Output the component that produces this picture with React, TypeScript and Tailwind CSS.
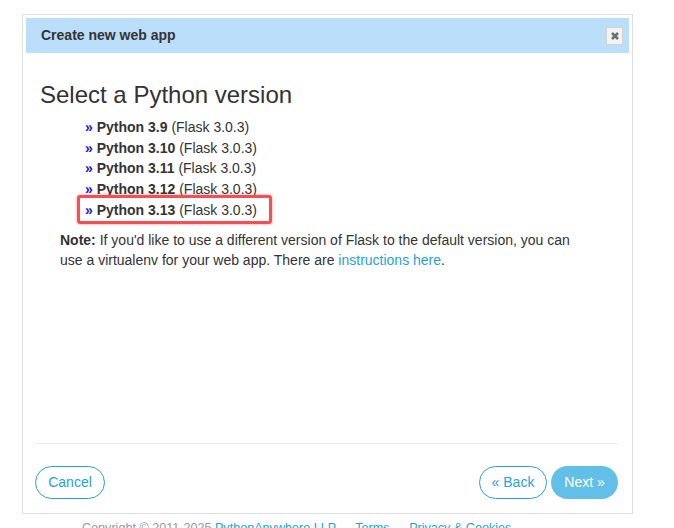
const versions = ["3.9", "3.10", "3.11", "3.12", "3.13"];

export default function App() {
  return (
    <div className="min-h-screen bg-white font-['Liberation_Sans',Arial,sans-serif] text-[#333]">
      <div className="ml-[22px] pt-[14px] w-[611px]">
        <div className="h-[500px] border border-[#ddd] p-[3px] flex flex-col">
          <div className="h-[35px] bg-[#bbdefb] flex items-center justify-between pl-[15px] pr-[6px]">
            <h4 className="text-[14px] font-bold">Create new web app</h4>
            <button className="w-[17px] h-[18px] bg-[#f3f3f3] border border-[#d4d4d4] flex items-center justify-center">
              <svg width="10" height="10" viewBox="0 0 10 10">
                <path d="M2 2 L8 8 M8 2 L2 8" stroke="#6f6f6f" strokeWidth="2.6" />
              </svg>
            </button>
          </div>

          <div className="flex-1 flex flex-col px-[11px]">
            <h2 className="text-[24px] leading-[28px] mt-[28px] ml-[3px]">Select a Python version</h2>
            <ul className="mt-[8px] ml-[48px] text-[14px] leading-[20.7px]">
              {versions.map((v) => (
                <li key={v} className="relative">
                  {v === "3.13" && (
                    <span className="absolute left-[-8px] top-[-5px] w-[195px] h-[29px] border-[3px] border-[#f44f52] rounded-[3px] shadow-[0_0_3px_rgba(244,79,82,0.6)]" />
                  )}
                  <a href="#" className="font-bold">
                    <span className="text-[#1a1acc]">»</span> Python {v}
                  </a>{" "}
                  (Flask 3.0.3)
                </li>
              ))}
            </ul>
            <p className="mt-[9px] ml-[23px] w-[520px] text-[14px] leading-[20px]">
              <strong>Note:</strong> If you'd like to use a different version of Flask to the default version, you can
              use a virtualenv for your web app. There are{" "}
              <a href="#" className="text-[#2a9fd6]">
                instructions here
              </a>
              .
            </p>

            <div className="mt-auto border-t border-[#eee] ml-[-2px] pt-[22px] pb-[11px] flex items-center">
              <button className="h-[33px] w-[70px] rounded-full border border-[#2a9fd6] text-[#2a9fd6] text-[14px]">
                Cancel
              </button>
              <div className="ml-auto flex gap-[4px]">
                <button className="h-[33px] w-[68px] rounded-full border border-[#2a9fd6] text-[#2a9fd6] text-[14px]">
                  « Back
                </button>
                <button className="h-[33px] w-[67px] rounded-full bg-[#62c0e8] text-white text-[14px]">Next »</button>
              </div>
            </div>
          </div>
        </div>
      </div>
      <div className="pl-[82px] pt-[5px] text-[12.6px] text-[#999]">
        Copyright © 2011-2025 <a href="#" className="text-[#2a9fd6]">PythonAnywhere LLP</a> —{" "}
        <a href="#" className="text-[#2a9fd6]">Terms</a> —{" "}
        <a href="#" className="text-[#2a9fd6]">Privacy &amp; Cookies</a>
      </div>
    </div>
  );
}
